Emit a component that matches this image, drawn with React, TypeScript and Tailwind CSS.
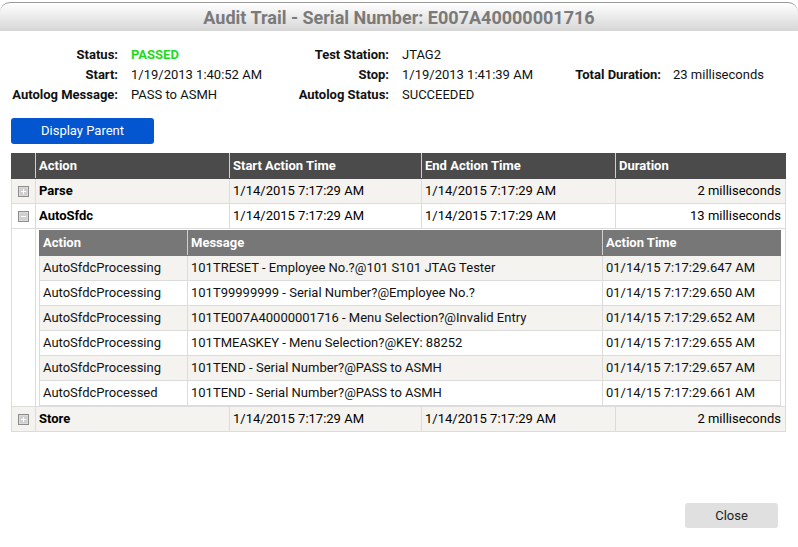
import React from "react";

const FONT = { fontFamily: "Roboto, 'Liberation Sans', sans-serif" };

const SUB_ROWS = [
  ["AutoSfdcProcessing", "101TRESET - Employee No.?@101 S101 JTAG Tester", "01/14/15 7:17:29.647 AM"],
  ["AutoSfdcProcessing", "101T99999999 - Serial Number?@Employee No.?", "01/14/15 7:17:29.650 AM"],
  ["AutoSfdcProcessing", "101TE007A40000001716 - Menu Selection?@Invalid Entry", "01/14/15 7:17:29.652 AM"],
  ["AutoSfdcProcessing", "101TMEASKEY - Menu Selection?@KEY: 88252", "01/14/15 7:17:29.655 AM"],
  ["AutoSfdcProcessing", "101TEND - Serial Number?@PASS to ASMH", "01/14/15 7:17:29.657 AM"],
  ["AutoSfdcProcessed", "101TEND - Serial Number?@PASS to ASMH", "01/14/15 7:17:29.661 AM"],
];

function ToggleIcon({ open }: { open?: boolean }) {
  return (
    <svg width="11" height="11" viewBox="0 0 11 11" className="mx-auto block">
      <rect x="0.5" y="0.5" width="10" height="10" fill="#e4e4e4" stroke="#8c8c8c" />
      <rect x="1.5" y="1.5" width="8" height="8" fill="#cfcfcf" />
      <line x1="3" y1="5.5" x2="8" y2="5.5" stroke="#fff" strokeWidth="1" />
      {!open && <line x1="5.5" y1="3" x2="5.5" y2="8" stroke="#fff" strokeWidth="1" />}
    </svg>
  );
}

function MainRow({ name, start, end, dur, odd, open }: { name: string; start: string; end: string; dur: string; odd?: boolean; open?: boolean }) {
  const bg = odd ? "bg-[#f4f3ef]" : "bg-white";
  return (
    <tr className={`h-[25px] ${bg}`}>
      <td className="border border-[#dcdcdc] p-0 align-middle">
        <ToggleIcon open={open} />
      </td>
      <td className="border border-[#dcdcdc] px-[3px] font-bold text-black">{name}</td>
      <td className="border border-[#dcdcdc] px-[3px] text-black">{start}</td>
      <td className="border border-[#dcdcdc] px-[3px] text-black">{end}</td>
      <td className="border border-[#dcdcdc] px-[4px] text-right text-black">{dur}</td>
    </tr>
  );
}

export default function App() {
  return (
    <div className="relative h-[547px] w-[798px] overflow-hidden bg-white text-[13px] text-[#111]" style={FONT}>
      {/* title bar */}
      <div className="mt-[2px] flex h-[29px] items-center justify-center rounded-t-[10px] border-t border-[#9a9a9a] bg-gradient-to-b from-white to-[#d6d6d6]">
        <span className="text-[18px] font-bold text-[#7a7a7a]">Audit Trail - Serial Number: E007A40000001716</span>
      </div>

      {/* summary */}
      <div className="mt-[14px] grid grid-cols-[118px_152px_119px_186px_86px_auto] leading-[20px]">
        <div className="text-right font-bold">Status:</div>
        <div className="pl-[13px] font-bold text-[#1ed81e]">PASSED</div>
        <div className="text-right font-bold">Test Station:</div>
        <div className="pl-[13px]">JTAG2</div>
        <div />
        <div />

        <div className="text-right font-bold">Start:</div>
        <div className="pl-[13px]">1/19/2013 1:40:52 AM</div>
        <div className="text-right font-bold">Stop:</div>
        <div className="pl-[13px]">1/19/2013 1:41:39 AM</div>
        <div className="text-right font-bold">Total Duration:</div>
        <div className="pl-[12px]">23 milliseconds</div>

        <div className="text-right font-bold">Autolog Message:</div>
        <div className="pl-[13px]">PASS to ASMH</div>
        <div className="text-right font-bold">Autolog Status:</div>
        <div className="pl-[13px]">SUCCEEDED</div>
        <div />
        <div />
      </div>

      <div className="px-[11px] pt-[13px]">
        <button className="h-[26px] w-[143px] rounded-[3px] bg-[#0356d0] text-[13px] text-white">Display Parent</button>
      </div>

      {/* main table */}
      <div className="mt-[9px] px-[11px]">
        <table className="w-[774px] table-fixed border-collapse">
          <colgroup>
            <col className="w-[24px]" />
            <col className="w-[194px]" />
            <col className="w-[192px]" />
            <col className="w-[194px]" />
            <col className="w-[170px]" />
          </colgroup>
          <thead>
            <tr className="h-[25px] bg-[#4b4b4b] text-left text-[13px] font-bold text-white">
              <th className="border border-[#cfcfcf] border-b-[#4b4b4b] border-t-[#4b4b4b] border-l-[#4b4b4b] p-0" />
              <th className="border border-[#cfcfcf] border-b-[#4b4b4b] border-t-[#4b4b4b] px-[3px]">Action</th>
              <th className="border border-[#cfcfcf] border-b-[#4b4b4b] border-t-[#4b4b4b] px-[3px]">Start Action Time</th>
              <th className="border border-[#cfcfcf] border-b-[#4b4b4b] border-t-[#4b4b4b] px-[3px]">End Action Time</th>
              <th className="border border-[#cfcfcf] border-b-[#4b4b4b] border-t-[#4b4b4b] border-r-[#4b4b4b] px-[3px]">Duration</th>
            </tr>
          </thead>
          <tbody>
            <MainRow name="Parse" start="1/14/2015 7:17:29 AM" end="1/14/2015 7:17:29 AM" dur="2 milliseconds" odd />
            <MainRow name="AutoSfdc" start="1/14/2015 7:17:29 AM" end="1/14/2015 7:17:29 AM" dur="13 milliseconds" open />
            <tr className="bg-white">
              <td className="border border-[#dcdcdc] p-0" />
              <td colSpan={4} className="border border-[#dcdcdc] pb-0 pl-[3px] pr-[4px] pt-[1px]">
                <table className="w-full table-fixed border-collapse">
                  <colgroup>
                    <col className="w-[148px]" />
                    <col className="w-[415px]" />
                    <col />
                  </colgroup>
                  <thead>
                    <tr className="h-[25px] bg-[#777777] text-left text-[13px] font-bold text-white">
                      <th className="border border-[#cfcfcf] border-b-[#777777] border-l-[#777777] border-t-[#777777] px-[3px]">Action</th>
                      <th className="border border-[#cfcfcf] border-b-[#777777] border-t-[#777777] px-[3px]">Message</th>
                      <th className="border border-[#cfcfcf] border-b-[#777777] border-r-[#777777] border-t-[#777777] px-[3px]">Action Time</th>
                    </tr>
                  </thead>
                  <tbody>
                    {SUB_ROWS.map((r, i) => (
                      <tr key={i} className={`h-[25px] ${i % 2 === 0 ? "bg-[#f4f3ef]" : "bg-white"}`}>
                        <td className="whitespace-nowrap border border-[#dcdcdc] px-[3px]">{r[0]}</td>
                        <td className="whitespace-nowrap border border-[#dcdcdc] px-[3px]">{r[1]}</td>
                        <td className="whitespace-nowrap border border-[#dcdcdc] px-[3px]">{r[2]}</td>
                      </tr>
                    ))}
                  </tbody>
                </table>
              </td>
            </tr>
            <MainRow name="Store" start="1/14/2015 7:17:29 AM" end="1/14/2015 7:17:29 AM" dur="2 milliseconds" odd />
          </tbody>
        </table>
      </div>

      {/* footer */}
      <div className="absolute bottom-[19px] right-[20px]">
        <button className="h-[25px] w-[93px] rounded-[3px] bg-[#e0e0e0] text-[13px] text-[#222]">Close</button>
      </div>
    </div>
  );
}
